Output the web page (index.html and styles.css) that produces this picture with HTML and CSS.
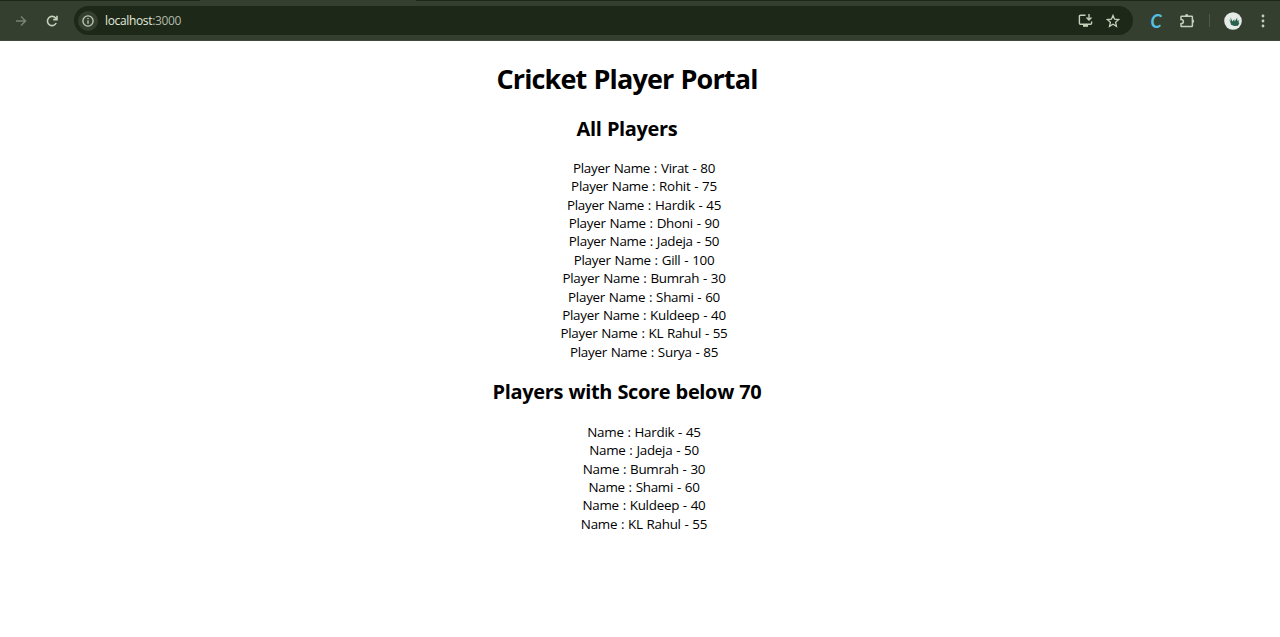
FILE: index.html
```html
<!DOCTYPE html>
<html lang="en">
<head>
<meta charset="utf-8">
<title>Cricket Player Portal</title>
<link rel="stylesheet" href="styles.css">
</head>
<body>
<header class="toolbar">
  <svg class="icon forward" viewBox="0 0 12 12"><path d="M1 6h9.5M6 1.4 10.6 6 6 10.6"/></svg>
  <svg class="icon reload" viewBox="0 0 12 12"><path d="M10.2 8A4.6 4.6 0 1 1 9.6 3.1L10.8 4.4M11 .8v3.8H7.2"/></svg>
  <div class="address">
    <span class="info"><svg class="icon" viewBox="0 0 12 12"><circle cx="6" cy="6" r="5.1"/><path d="M6 5.4v3.3M6 3v1.3"/></svg></span>
    <span class="url">localhost<span class="port">:3000</span></span>
    <svg class="icon install" viewBox="0 0 15 13"><path d="M7.5 1.2H2.4q-1 0-1 1v7q0 1 1 1h10.2q1 0 1-1V7.6M11 0v5.6M8.5 3.4 11 5.9l2.5-2.5"/><path class="solid" d="M5 10h5v2.8H5z"/></svg>
    <svg class="icon star" viewBox="0 0 14 14"><path d="m7 1.4 1.6 3.8 4.1.4-3.1 2.7.9 4.1L7 10.2l-3.5 2.2.9-4.1-3.1-2.7 4.1-.4z"/></svg>
  </div>
  <span class="extension">C</span>
  <svg class="icon puzzle" viewBox="0 0 15 15"><path d="M1.7 3.2h10q.7 0 .7.7v9q0 .7-.7.7h-10q-.7 0-.7-.7v-2.2c3.2 0 3.2-4.3 0-4.3V3.9q0-.7.7-.7z"/><path class="solid" d="M5 3a1.7 1.9 0 0 1 3.4 0zM12.6 6.6a1.6 1.7 0 0 1 0 3.4z"/></svg>
  <span class="divider"></span>
  <svg class="avatar" viewBox="0 0 18 18"><circle cx="9" cy="9" r="8.8"/><path d="M5 7 6.8 9.4 6.6 5.2l1.8 4.4 1.8-2.4.5 2.3 2.6-3.9-.2 3.2 2.2-.5-.9 2 1 .7-1.4 2.8-3.7.3-3.3-1.4-.4-1.8z"/></svg>
  <svg class="menu" viewBox="0 0 4 14"><circle cx="2" cy="2" r="1.4"/><circle cx="2" cy="7" r="1.4"/><circle cx="2" cy="12" r="1.4"/></svg>
</header>
<main class="portal">
  <h1 class="title">Cricket Player Portal</h1>
  <h2 class="subtitle">All Players</h2>
  <ul class="players">
    <li>Player Name : Virat - 80</li>
    <li>Player Name : Rohit - 75</li>
    <li>Player Name : Hardik - 45</li>
    <li>Player Name : Dhoni - 90</li>
    <li>Player Name : Jadeja - 50</li>
    <li>Player Name : Gill - 100</li>
    <li>Player Name : Bumrah - 30</li>
    <li>Player Name : Shami - 60</li>
    <li>Player Name : Kuldeep - 40</li>
    <li>Player Name : KL Rahul - 55</li>
    <li>Player Name : Surya - 85</li>
  </ul>
  <h2 class="subtitle">Players with Score below 70</h2>
  <ul class="players low-scores">
    <li>Name : Hardik - 45</li>
    <li>Name : Jadeja - 50</li>
    <li>Name : Bumrah - 30</li>
    <li>Name : Shami - 60</li>
    <li>Name : Kuldeep - 40</li>
    <li>Name : KL Rahul - 55</li>
  </ul>
</main>
</body>
</html>
```
FILE: styles.css
```css
* { box-sizing: border-box; }
body {
  margin: 0;
  background: #fff;
  color: #000;
  font-family: "Open Sans", "Noto Sans", sans-serif;
  overflow: hidden;
}
.toolbar {
  display: flex;
  align-items: center;
  height: 41px;
  padding: 1px 15px 0 15px;
  background: linear-gradient(#1d2818, #1d2818) 0 0 / 200px 1px no-repeat,
    linear-gradient(#1d2818, #1d2818) 100% 0 / 864px 1px no-repeat, #343f2f;
  border-bottom: 1px solid #40483c;
}
.icon { fill: none; stroke: #c5cfba; stroke-width: 1.4; flex: none; }
.icon .solid { fill: #c5cfba; stroke: none; }
.forward { width: 12px; height: 12px; stroke: #7b8474; }
.reload { width: 12px; height: 12px; margin-left: 19px; stroke-width: 1.6; }
.address {
  display: flex;
  align-items: center;
  width: 1059px;
  height: 29px;
  margin-left: 16px;
  padding: 0 13px 0 4px;
  border-radius: 15px;
  background: #1d2818;
}
.info {
  display: flex;
  align-items: center;
  justify-content: center;
  width: 20px;
  height: 20px;
  border-radius: 50%;
  background: #343f2f;
}
.info .icon { width: 12px; height: 12px; stroke-width: 1.3; }
.url { margin-left: 7px; color: #e3e8dc; font-size: 12px; letter-spacing: -0.35px; }
.port { color: #b0b9a8; }
.install { width: 15px; height: 13px; margin-left: auto; }
.star { width: 14px; height: 14px; margin-left: 13px; stroke-width: 1.3; }
.extension {
  width: 14px;
  margin-left: 16px;
  color: #55bfe3;
  font: italic 700 18px/20px Lato, sans-serif;
  text-align: center;
}
.puzzle { width: 15px; height: 15px; margin-left: 17px; stroke-width: 1.5; }
.divider { width: 1px; height: 13px; margin-left: 14px; background: #505a49; }
.avatar { width: 18px; height: 18px; margin-left: 14px; fill: #e7ebe8; }
.avatar path { fill: #28614e; }
.menu { width: 4px; height: 14px; margin-left: auto; fill: #c5cfba; }
.portal { width: 1254px; text-align: center; }
.title {
  margin: 0;
  padding-top: 19px;
  font-size: 27px;
  line-height: 38px;
  font-weight: 700;
  letter-spacing: -0.87px;
  word-spacing: 1px;
}
.subtitle {
  margin: 17px 0 0;
  font-size: 20px;
  line-height: 28px;
  font-weight: 700;
  letter-spacing: -0.35px;
  word-spacing: 0.5px;
}
.players {
  margin: 15.7px 0 0;
  padding: 0 0 0 34px;
  list-style: none;
  font-size: 13.4px;
  line-height: 18.4px;
  letter-spacing: -0.27px;
  word-spacing: 0.6px;
}
.low-scores { margin-top: 16.7px; }
```
